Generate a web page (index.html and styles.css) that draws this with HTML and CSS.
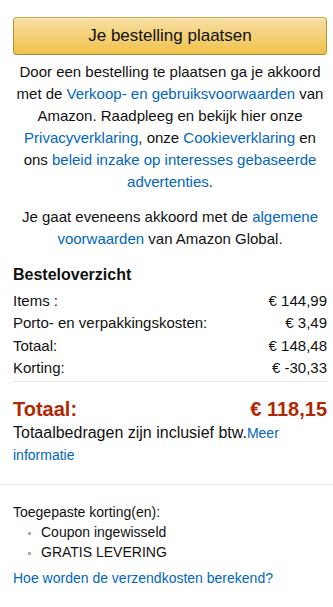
FILE: index.html
```html
<!DOCTYPE html>
<html lang="nl">
<head>
    <meta charset="UTF-8">
    <meta name="viewport" content="width=device-width, initial-scale=1.0">
    <title>Bestelling plaatsen</title>
    <link rel="stylesheet" href="styles.css">
</head>
<body>

<div class="checkout">
    <button class="place-order">Je bestelling plaatsen</button>

    <p class="legal">
        Door een bestelling te plaatsen ga je akkoord met de
        <a href="#">Verkoop- en gebruiksvoorwaarden</a> van Amazon. Raadpleeg en bekijk hier onze
        <a href="#">Privacyverklaring</a>, onze <a href="#">Cookieverklaring</a> en ons
        <a href="#">beleid inzake op interesses gebaseerde advertenties</a>.
    </p>
    <p class="legal">
        Je gaat eveneens akkoord met de <a href="#">algemene voorwaarden</a> van Amazon Global.
    </p>

    <h3 class="summary-title">Besteloverzicht</h3>
    <div class="summary-row"><span>Items :</span><span>€ 144,99</span></div>
    <div class="summary-row"><span>Porto- en verpakkingskosten:</span><span>€ 3,49</span></div>
    <div class="summary-row"><span>Totaal:</span><span>€ 148,48</span></div>
    <div class="summary-row"><span>Korting:</span><span>€ -30,33</span></div>

    <hr class="divider">

    <div class="grand-total"><span>Totaal:</span><span>€ 118,15</span></div>
    <p class="vat">Totaalbedragen zijn inclusief btw.<a href="#">Meer informatie</a></p>
</div>

<hr class="divider-full">

<div class="promos">
    <div>Toegepaste korting(en):</div>
    <ul>
        <li>Coupon ingewisseld</li>
        <li>GRATIS LEVERING</li>
    </ul>
    <a href="#">Hoe worden de verzendkosten berekend?</a>
</div>

</body>
</html>
```

FILE: styles.css
```css
body {
    font-family: "Liberation Sans", Arial, sans-serif;
    color: #111;
    background-color: #fff;
    margin: 0;
    padding: 0;
    font-size: 15px;
    line-height: 22px;
}
a {
    color: #0066c0;
    text-decoration: none;
}
.checkout {
    padding: 17px 6px 0 13px;
}
.place-order {
    display: block;
    width: 100%;
    height: 38px;
    font-family: inherit;
    font-size: 17px;
    color: #111;
    background: linear-gradient(to bottom, #f7dfa5, #f0c14b);
    border: 1px solid;
    border-color: #c9a23f #b8922f #a88734;
    border-radius: 4px;
    box-shadow: inset 0 1px 0 rgba(255, 255, 255, 0.4);
    cursor: pointer;
}
.legal {
    text-align: center;
    margin: 0 0 13px;
    padding: 0 2px;
}
.legal:first-of-type {
    margin-top: 6px;
}
.summary-title {
    font-size: 16px;
    font-weight: bold;
    margin: 13px 0 3px;
    line-height: 24px;
}
.summary-row {
    display: flex;
    justify-content: space-between;
    line-height: 22.3px;
}
.divider {
    border: none;
    border-top: 1px solid #e7e7e7;
    margin: 2px 0 0;
}
.grand-total {
    display: flex;
    justify-content: space-between;
    color: #b12704;
    font-size: 20px;
    font-weight: bold;
    margin-top: 16px;
    line-height: 22px;
}
.vat {
    margin: 2px 0 0;
    font-size: 16px;
    line-height: 21px;
}
.vat a {
    font-size: 14px;
}
.divider-full {
    border: none;
    border-top: 1px solid #e7e7e7;
    margin: 18px 0 0;
}
.promos {
    padding: 17px 13px 0;
    font-size: 14px;
    line-height: 20px;
}
.promos ul {
    margin: 0 0 6px;
    padding-left: 28px;
    list-style: square;
}
.promos li::marker {
    color: #aaa;
    font-size: 10px;
}
```
